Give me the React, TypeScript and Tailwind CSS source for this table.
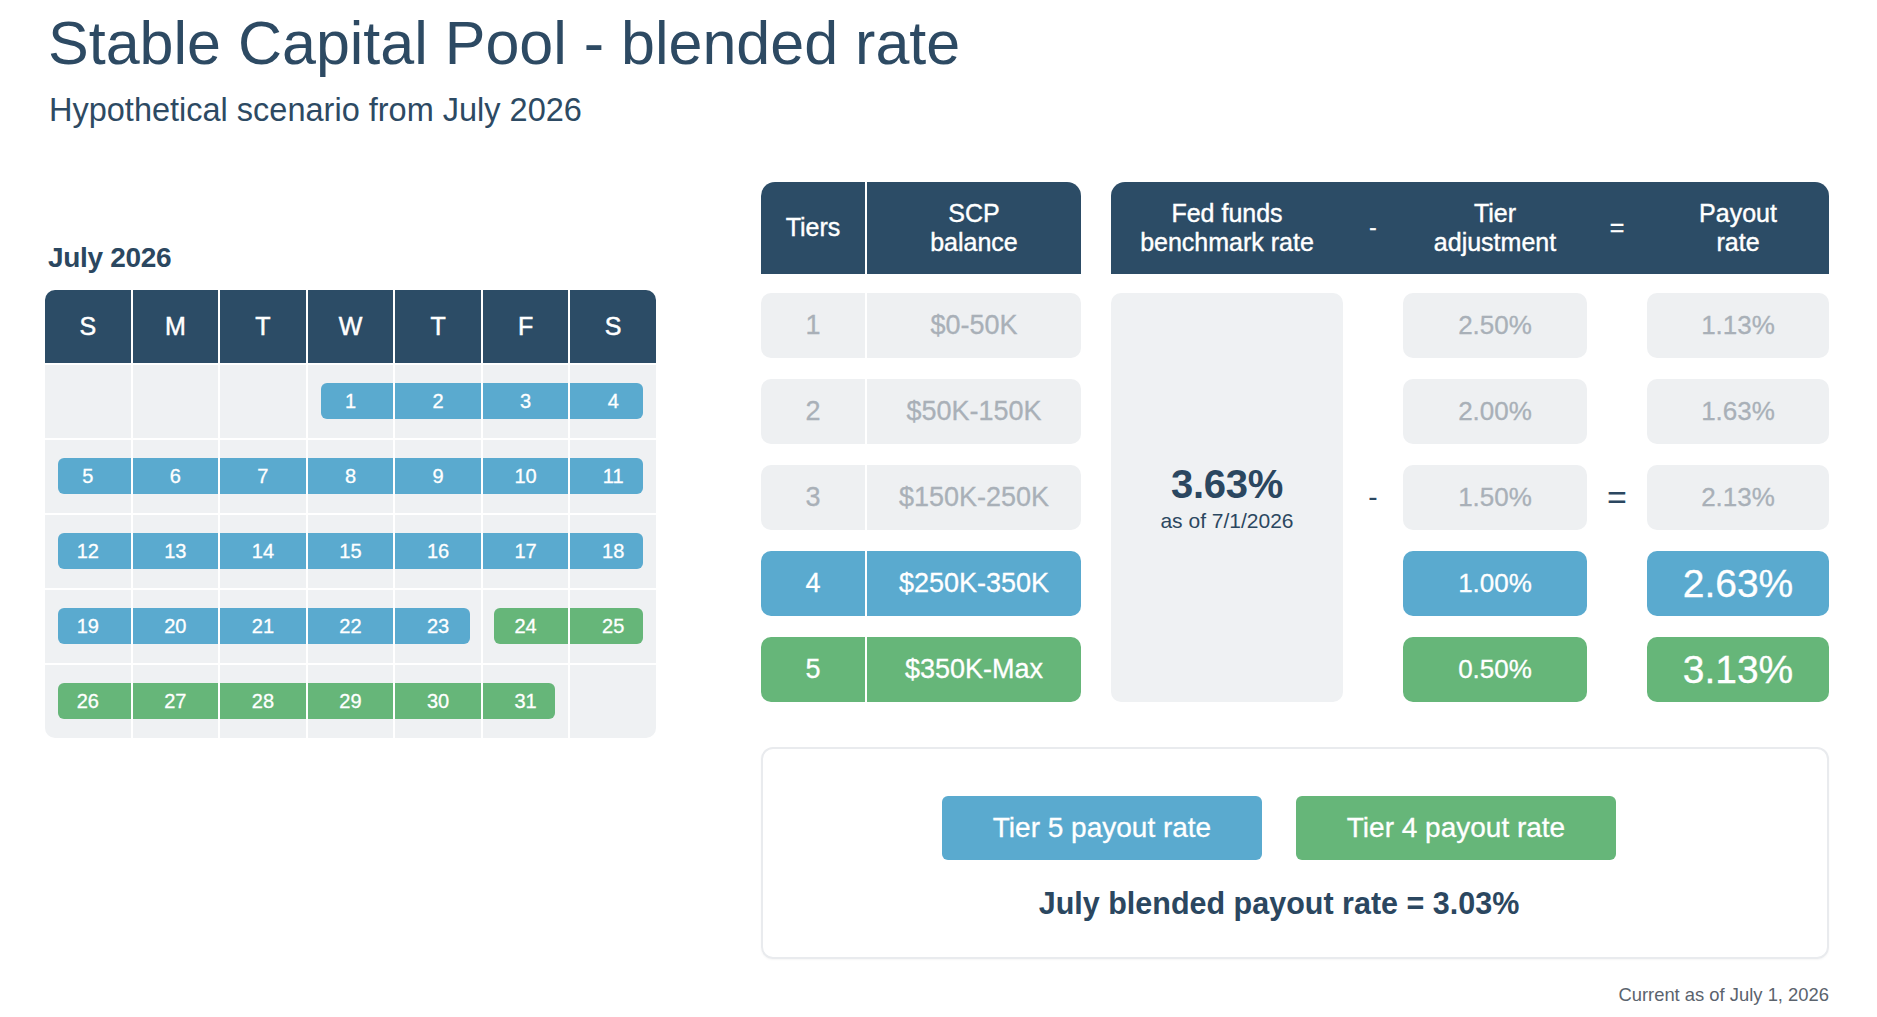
import React from "react";

type Color = "blue" | "green" | null;

const weeks: (number | null)[][] = [
  [null, null, null, 1, 2, 3, 4],
  [5, 6, 7, 8, 9, 10, 11],
  [12, 13, 14, 15, 16, 17, 18],
  [19, 20, 21, 22, 23, 24, 25],
  [26, 27, 28, 29, 30, 31, null],
];

const colorOf = (d: number | null): Color => (d === null ? null : d >= 24 ? "green" : "blue");

function DayCell({ week, i }: { week: (number | null)[]; i: number }) {
  const d = week[i];
  const c = colorOf(d);
  const prev = i > 0 ? colorOf(week[i - 1]) : null;
  const next = i < 6 ? colorOf(week[i + 1]) : null;
  const start = c !== null && prev !== c;
  const end = c !== null && next !== c;
  const split = c === "blue" && next === "green";
  const splitStart = c === "green" && prev === "blue";
  return (
    <div className="grid h-[73px] items-center bg-[#eff1f3]">
      {c && (
        <div
          className={[
            "[grid-area:1/1] h-[36px]",
            c === "blue" ? "bg-[#5aaacf]" : "bg-[#66b679]",
            start ? (splitStart ? "ml-[11px] rounded-l-[6px]" : "ml-[13px] rounded-l-[6px]") : "",
            end ? (split ? "mr-[11px] rounded-r-[6px]" : "mr-[13px] rounded-r-[6px]") : "",
          ].join(" ")}
        />
      )}
      {d !== null && (
        <span className="[grid-area:1/1] text-center text-[20px] leading-none text-white [-webkit-text-stroke:0.3px_currentColor]">{d}</span>
      )}
    </div>
  );
}

function Calendar() {
  const days = ["S", "M", "T", "W", "T", "F", "S"];
  return (
    <div className="w-[611px]">
      <div className="pl-[3px] text-[28px] font-semibold leading-none tracking-[-0.3px] text-[#2b4760]">July 2026</div>
      <div className="mt-[18px] grid grid-cols-7 gap-[2px] overflow-hidden rounded-[10px] bg-white">
        {days.map((d, i) => (
          <div key={i} className="flex h-[73px] items-center justify-center bg-[#2c4c66] text-[25px] leading-none text-white [-webkit-text-stroke:0.5px_currentColor]">
            {d}
          </div>
        ))}
        {weeks.map((w, wi) =>
          w.map((_, i) => <DayCell key={`${wi}-${i}`} week={w} i={i} />)
        )}
      </div>
    </div>
  );
}

const tiers = [
  { n: "1", bal: "$0-50K", adj: "2.50%", pay: "1.13%", kind: "gray" },
  { n: "2", bal: "$50K-150K", adj: "2.00%", pay: "1.63%", kind: "gray" },
  { n: "3", bal: "$150K-250K", adj: "1.50%", pay: "2.13%", kind: "gray" },
  { n: "4", bal: "$250K-350K", adj: "1.00%", pay: "2.63%", kind: "blue" },
  { n: "5", bal: "$350K-Max", adj: "0.50%", pay: "3.13%", kind: "green" },
];

const bgFor = (k: string) => (k === "blue" ? "bg-[#5aaacf]" : k === "green" ? "bg-[#66b679]" : "bg-[#eef0f2]");
const fgFor = (k: string) => (k === "gray" ? "text-[#a9b0b8]" : "text-white");

function RateTable() {
  return (
    <div className="flex gap-[30px]">
      {/* Left group */}
      <div className="w-[320px]">
        <div className="flex h-[92px] gap-[2px] overflow-hidden rounded-t-[14px] bg-white text-[25px] leading-[29px] text-white [-webkit-text-stroke:0.4px_currentColor]">
          <div className="flex w-[104px] items-center justify-center bg-[#2c4c66]">Tiers</div>
          <div className="flex flex-1 flex-col items-center justify-center bg-[#2c4c66] text-center">
            <span>SCP</span>
            <span>balance</span>
          </div>
        </div>
        <div className="mt-[19px] flex flex-col gap-[21px]">
          {tiers.map((t) => (
            <div key={t.n} className={`flex h-[65px] gap-[2px] overflow-hidden rounded-[10px] bg-white text-[27px] leading-none [-webkit-text-stroke:0.3px_currentColor] ${fgFor(t.kind)}`}>
              <div className={`flex w-[104px] items-center justify-center ${bgFor(t.kind)}`}>{t.n}</div>
              <div className={`flex flex-1 items-center justify-center ${bgFor(t.kind)}`}>{t.bal}</div>
            </div>
          ))}
        </div>
      </div>
      {/* Right group */}
      <div className="w-[718px]">
        <div className="grid h-[92px] grid-cols-[232px_60px_184px_60px_182px] items-center rounded-t-[14px] bg-[#2c4c66] text-center text-[25px] leading-[29px] text-white [-webkit-text-stroke:0.4px_currentColor]">
          <div className="flex flex-col">
            <span>Fed funds</span>
            <span>benchmark rate</span>
          </div>
          <div className="text-[22px]">-</div>
          <div className="flex flex-col">
            <span>Tier</span>
            <span>adjustment</span>
          </div>
          <div className="text-[25px]">=</div>
          <div className="flex flex-col">
            <span>Payout</span>
            <span>rate</span>
          </div>
        </div>
        <div className="mt-[19px] grid grid-cols-[232px_60px_184px_60px_182px] grid-rows-[repeat(5,65px)] gap-y-[21px]">
          <div className="col-start-1 row-span-5 row-start-1 flex flex-col items-center justify-center rounded-[10px] bg-[#eff1f3] text-[#2b4760]">
            <span className="text-[40px] font-bold leading-none tracking-[-0.3px]">3.63%</span>
            <span className="mt-[6px] text-[21px] leading-none">as of 7/1/2026</span>
          </div>
          {tiers.map((t, i) => (
            <React.Fragment key={t.n}>
              <div className="col-start-2 flex items-center justify-center text-[28px] leading-none text-[#2b4760]">
                {i === 2 ? "-" : ""}
              </div>
              <div className={`col-start-3 flex items-center justify-center rounded-[10px] text-[26px] leading-none [-webkit-text-stroke:0.3px_currentColor] ${bgFor(t.kind)} ${fgFor(t.kind)}`}>
                {t.adj}
              </div>
              <div className="col-start-4 flex items-center justify-center text-[34px] leading-none text-[#2b4760]">
                {i === 2 ? "=" : ""}
              </div>
              <div
                className={`col-start-5 flex items-center justify-center rounded-[10px] leading-none [-webkit-text-stroke:0.3px_currentColor] ${bgFor(t.kind)} ${fgFor(t.kind)} ${
                  t.kind === "gray" ? "text-[26px]" : "text-[39px]"
                }`}
              >
                {t.pay}
              </div>
            </React.Fragment>
          ))}
        </div>
      </div>
    </div>
  );
}

export default function App() {
  return (
    <div className="relative h-[1017px] w-[1877px] overflow-hidden bg-white font-['Liberation_Sans',Arial,sans-serif] text-[#2b4760]">
      <div className="pl-[48px] pt-[13px]">
        <h1 className="text-[61px] leading-none text-[#2d4a63]">Stable Capital Pool - blended rate</h1>
        <p className="mt-[20px] pl-[1px] text-[32.5px] leading-none text-[#2d4a63]">Hypothetical scenario from July 2026</p>
      </div>
      <div className="flex pl-[45px]">
        <div className="mt-[117px]">
          <Calendar />
        </div>
        <div className="ml-[105px] mt-[55px] w-[1068px]">
          <RateTable />
          <div className="mt-[45px] flex h-[212px] flex-col items-center rounded-[12px] border-2 border-[#e9ebee] pr-[32px] pt-[47px] shadow-[0_1px_2px_rgba(0,0,0,0.04)]">
            <div className="flex gap-[34px]">
              <div className="flex h-[64px] w-[320px] items-center justify-center rounded-[6px] bg-[#5aaacf] text-[28px] leading-none text-white [-webkit-text-stroke:0.3px_currentColor]">
                Tier 5 payout rate
              </div>
              <div className="flex h-[64px] w-[320px] items-center justify-center rounded-[6px] bg-[#66b679] text-[28px] leading-none text-white [-webkit-text-stroke:0.3px_currentColor]">
                Tier 4 payout rate
              </div>
            </div>
            <div className="mt-[28px] text-[30.5px] font-semibold leading-none text-[#2b4760]">
              July blended payout rate = 3.03%
            </div>
          </div>
          <div className="mt-[27px] text-right text-[18.4px] leading-none text-[#5b636d]">Current as of July 1, 2026</div>
        </div>
      </div>
    </div>
  );
}
